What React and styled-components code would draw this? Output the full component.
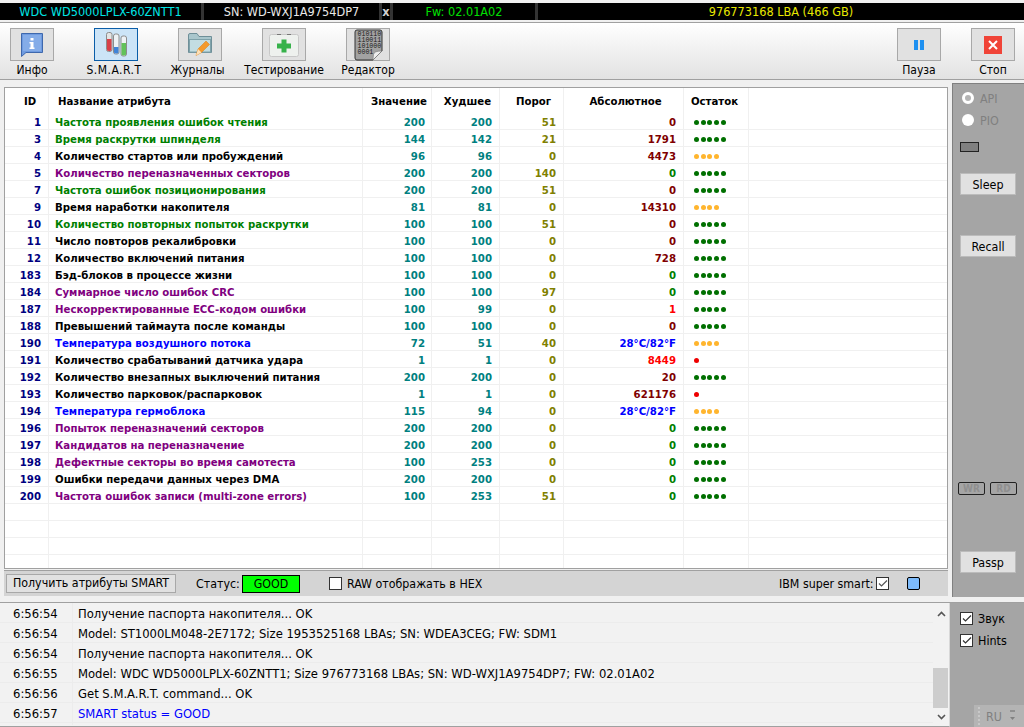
import React from "react";
import styled, { createGlobalStyle } from "styled-components";

const UI_FONT = `"DejaVu Sans Condensed", "DejaVu Sans", "Liberation Sans", sans-serif`;

const GlobalStyle = createGlobalStyle`
  html, body { margin: 0; padding: 0; background: #f0f0f0; }
  body { font-family: ${UI_FONT}; font-size: 12px; color: #000; }
  * { box-sizing: border-box; }
`;

const COLS = "44px 314px 69px 68px 64px 120px 65px 1fr";

const Page = styled.div`
  width: 1024px;
  height: 727px;
  overflow: hidden;
  display: flex;
  flex-direction: column;
  background: #f0f0f0;
`;

const TopBar = styled.div`
  height: 17px;
  margin-top: 3px;
  background: #000;
  display: flex;
  font-size: 12.6px;
  line-height: 17px;
`;

const TopCell = styled.div`
  width: ${(p) => p.$w}px;
  color: ${(p) => p.$color};
  text-align: center;
  border-right: ${(p) => (p.$sep ? "3px solid #333" : "none")};
  white-space: nowrap;
`;

const Toolbar = styled.div`
  height: 58px;
  margin-top: 2px;
  border-top: 1px solid #a0a0a0;
  border-bottom: 1px solid #a0a0a0;
  background: linear-gradient(#ffffff, #e2e2e2);
  display: flex;
  padding: 5px 0 0 10px;
`;

const ToolItem = styled.div`
  width: 44px;
  margin-left: ${(p) => p.$ml || 0}px;
  display: flex;
  flex-direction: column;
  align-items: center;
`;

const ToolIcon = styled.div`
  width: 44px;
  height: 33px;
  flex: none;
  border: 1px solid ${(p) => (p.$active ? "#0a5da8" : "#a8a8a8")};
  background: ${(p) => (p.$active ? "#cce4f7" : "#e1e1e1")};
  display: flex;
  align-items: center;
  justify-content: center;
`;

const ToolLabel = styled.div`
  margin-top: 2px;
  margin-left: ${(p) => p.$shift || 0}px;
  font-size: 12px;
  line-height: 14px;
  white-space: nowrap;
  letter-spacing: ${(p) => (p.$spaced ? "0.5px" : "0")};
`;

const ToolSpacer = styled.div`
  flex: ${(p) => (p.$w ? `0 0 ${p.$w}px` : "1")};
`;

const Main = styled.div`
  height: 522px;
  display: flex;
`;

const LeftPane = styled.div`
  width: 950px;
  padding: 7px 2px 0 4px;
  display: flex;
  flex-direction: column;
`;

const TableBox = styled.div`
  height: 482px;
  border: 1px solid #a0a0a0;
  background: #fff;
  overflow: hidden;
`;

const AttrRow = styled.div`
  display: grid;
  grid-template-columns: ${COLS};
  grid-auto-rows: 16px;
  height: 17px;
  line-height: 20px;
  border-bottom: 1px solid #f0f0f0;
  font-weight: bold;
  font-size: 11.3px;
`;

const HeadRow = styled(AttrRow)`
  grid-auto-rows: 25px;
  height: 25px;
  line-height: 28px;
  border-bottom: 0;
`;

const HeadCell = styled.div`
  text-align: ${(p) => p.$align || "center"};
  padding-left: ${(p) => p.$pad || 0}px;
  padding-right: ${(p) => p.$padr || 0}px;
  border-right: 1px solid #f0f0f0;
  white-space: nowrap;
`;

const Cell = styled.div`
  color: ${(p) => p.$color || "#000"};
  text-align: ${(p) => p.$align || "right"};
  padding-right: ${(p) => p.$padr || 0}px;
  padding-left: ${(p) => p.$pad || 0}px;
  border-right: 1px solid #f0f0f0;
  white-space: nowrap;
`;

const DotsCell = styled.div`
  display: flex;
  align-items: center;
  gap: 1.7px;
  padding: 2px 0 0 10px;
  border-right: 1px solid #f0f0f0;
`;

const Dot = styled.span`
  width: 5px;
  height: 5px;
  border-radius: 50%;
  background: ${(p) => p.$color};
`;

const StatusBar = styled.div`
  height: 26px;
  margin-top: 1px;
  background: #d4d4d4;
  display: flex;
  align-items: center;
  padding: 0 0 0 2px;
  border-top: 1px solid #a0a0a0;
  font-size: 12.3px;
`;

const GetButton = styled.div`
  width: 170px;
  height: 19px;
  line-height: 17px;
  text-align: center;
  border: 1px solid #a8a8a8;
  background: #e1e1e1;
  white-space: nowrap;
`;

const StatusLabel = styled.div`
  width: ${(p) => p.$w}px;
  margin-left: ${(p) => p.$ml || 0}px;
  white-space: nowrap;
`;

const GoodBox = styled.div`
  width: 58px;
  height: 18px;
  line-height: 16px;
  text-align: center;
  background: #00ff00;
  border: 1px solid #000;
`;

const Check = styled.span`
  display: inline-flex;
  width: 13px;
  height: 13px;
  flex: none;
  border: 1px solid #333;
  background: #fff;
  margin-left: ${(p) => p.$ml || 0}px;
`;

const BlueSquare = styled.div`
  width: 13px;
  height: 13px;
  margin-left: 18px;
  background: #7dbbfb;
  border: 1px solid #000;
  border-radius: 2px;
`;

const SidePane = styled.div`
  flex: 1;
  margin: 3px 0 5px 2px;
  background: #a5a5a5;
  border-left: 1px solid #808080;
  border-top: 1px solid #808080;
  padding: 3px 0 0 7px;
  display: flex;
  flex-direction: column;
  font-size: 12.4px;
`;

const RadioRow = styled.div`
  display: flex;
  align-items: center;
  height: 22px;
  color: #808080;
  gap: 6px;
  padding-left: 2px;
`;

const Radio = styled.span`
  width: 12px;
  height: 12px;
  border-radius: 50%;
  background: ${(p) => (p.$on ? "#b4b4b4" : "#fff")};
  border: ${(p) => (p.$on ? "3px solid #fff" : "none")};
`;

const Led = styled.div`
  width: 19px;
  height: 10px;
  margin-top: 11px;
  background: #808080;
  border: 1px solid #222;
`;

const SideButton = styled.div`
  width: 56px;
  height: 22px;
  flex: none;
  line-height: 21px;
  margin-top: ${(p) => p.$mt}px;
  text-align: center;
  background: #e1e1e1;
  border: 1px solid #bcbcbc;
`;

const Mini = styled.div`
  display: flex;
  gap: 5px;
  margin: 225px 0 0 -2px;
`;

const MiniBox = styled.div`
  width: 27px;
  height: 13px;
  line-height: 11px;
  text-align: center;
  font-size: 10px;
  font-weight: bold;
  color: #8f8f8f;
  border: 1px solid #222;
  border-radius: 2px;
`;

const Bottom = styled.div`
  flex: 1;
  display: flex;
  border-top: 1px solid #a0a0a0;
`;

const LogPane = styled.div`
  width: 950px;
  height: 124px;
  background: #f2f2f2;
  display: flex;
  border-bottom: 1px solid #a0a0a0;
  border-right: 1px solid #d8d8d8;
`;

const LogList = styled.div`
  flex: 1;
`;

const LogRow = styled.div`
  display: grid;
  grid-template-columns: 73px 1fr;
  height: 20px;
  line-height: 22px;
  border-bottom: 1px solid #ececec;
  font-size: 12.9px;
  color: ${(p) => p.$color || "#000"};
`;

const LogTime = styled.div`
  padding-left: 13px;
  border-right: 1px solid #ececec;
  color: #000;
`;

const LogMsg = styled.div`
  padding-left: 5px;
  white-space: nowrap;
`;

const ScrollBar = styled.div`
  width: 16px;
  display: flex;
  flex-direction: column;
  align-items: center;
  justify-content: space-between;
  position: relative;
  background: #f2f2f2;
  padding: 8px 0 6px;
`;

const ScrollThumb = styled.div`
  position: absolute;
  left: 0;
  right: 1px;
  bottom: 18px;
  height: 40px;
  background: #cdcdcd;
`;

const BottomSide = styled.div`
  flex: 1;
  background: #a5a5a5;
  padding: 9px 0 0 10px;
  position: relative;
  font-size: 12.4px;
`;

const SideCheck = styled.div`
  display: flex;
  align-items: center;
  gap: 5px;
  height: 13px;
  margin-bottom: 9px;
`;

const LangBar = styled.div`
  position: absolute;
  right: 0;
  bottom: 0;
  width: 50px;
  height: 22px;
  background: #b4b4b4;
  color: #808080;
  display: flex;
  align-items: center;
  padding-left: 4px;
  border-left: 0;
`;

const LangGrip = styled.span`
  width: 0;
  height: 18px;
  border-left: 2px dotted #c8c8c8;
`;

const LangText = styled.span`
  margin-left: 6px;
  width: 23px;
`;

const Tick = ({ color = "#555" }) => (
  <svg width="11" height="11" viewBox="0 0 11 11">
    <path d="M2 5.5 L4.5 8 L10 2.5" fill="none" stroke={color} strokeWidth="1.2" />
  </svg>
);

const InfoIcon = () => (
  <svg width="22" height="24" viewBox="0 0 22 24">
    <path d="M0.5 0.5 H21.5 V19.5 H5 L0.5 23.5 Z" fill="#6f9be0" stroke="#3e68ad" />
    <rect x="2" y="2" width="18" height="16" fill="#84ace8" />
    <rect x="9.5" y="5" width="3" height="2.5" fill="#fff" />
    <path d="M8.5 9 H12.5 V14.5 H13.5 V16 H8.5 V14.5 H9.5 V10.5 H8.5 Z" fill="#fff" />
  </svg>
);

const TubesIcon = () => (
  <svg width="21" height="25" viewBox="0 0 21 25">
    <rect x="0.5" y="0.5" width="5.5" height="19" rx="2" fill="#e4e4e4" stroke="#8c8c8c" />
    <path d="M1 7 H5.5 V18 Q5.5 19 3.2 19 Q1 19 1 18 Z" fill="#d8414a" />
    <rect x="7.5" y="2" width="5.5" height="20" rx="2" fill="#eef2f6" stroke="#8c8c8c" />
    <path d="M8 15 H12.5 V20.5 Q12.5 21.5 10.2 21.5 Q8 21.5 8 20.5 Z" fill="#3f84d8" />
    <rect x="15" y="4" width="5.5" height="20" rx="2" fill="#eef2f6" stroke="#8c8c8c" />
    <path d="M15.5 11 H20 V22.5 Q20 23.5 17.7 23.5 Q15.5 23.5 15.5 22.5 Z" fill="#62c25a" />
  </svg>
);

const FolderIcon = () => (
  <svg width="24" height="23" viewBox="0 0 24 23">
    <path d="M0.5 2 Q0.5 0.5 2 0.5 H9 L11 3.5 H23.5 V19.5 H0.5 Z" fill="#a9c6cc" stroke="#6f8f98" />
    <rect x="1.5" y="6.5" width="21" height="12.5" fill="#c3dde2" stroke="#7fa2aa" />
    <path d="M8 22.5 L10 16 L18 8 L21.5 11.5 L13.5 19.5 Z" fill="#f39a2d" stroke="#d87c12" strokeWidth="0.5" />
    <path d="M8 22.5 L10 16 L13.5 19.5 Z" fill="#fde0b8" />
  </svg>
);

const KitIcon = () => (
  <svg width="30" height="24" viewBox="0 0 30 24">
    <path d="M0.5 3.5 Q0.5 1.5 2.5 1.5 H27.5 Q29.5 1.5 29.5 3.5 V21.5 Q29.5 23.5 27.5 23.5 H2.5 Q0.5 23.5 0.5 21.5 Z" fill="#eef1ee" stroke="#c8c8c8" />
    <path d="M8 1.5 H12 M18 1.5 H22" stroke="#777" strokeWidth="1" />
    <path d="M12.5 6.5 H17.5 V10.5 H22 V15.5 H17.5 V19.5 H12.5 V15.5 H8 V10.5 H12.5 Z" fill="#36b24a" />
  </svg>
);

const BinaryText = styled.text`
  font-family: "Liberation Mono", monospace;
  font-size: 6.6px;
  fill: #1a1a1a;
`;

const DocIcon = () => (
  <svg width="29" height="32" viewBox="0 0 29 32">
    <path d="M1 3 Q1 1 3 1 H26 Q28 1 28 3 V22 L19 31 H3 Q1 31 1 29 Z" fill="#a2a2a2" stroke="#333" />
    <path d="M19 31 Q19 24 21 23 Q24 22 28 22 Z" fill="#eee" stroke="#777" strokeWidth="0.6" />
    <BinaryText x="3.5" y="7">010110</BinaryText>
    <BinaryText x="3.5" y="13">110011</BinaryText>
    <BinaryText x="3.5" y="19">101000</BinaryText>
    <BinaryText x="3.5" y="25">0001</BinaryText>
  </svg>
);

const PauseIcon = () => (
  <svg width="10" height="10" viewBox="0 0 10 10">
    <rect x="0" y="0" width="4" height="10" fill="#1e90f0" />
    <rect x="6" y="0" width="4" height="10" fill="#1e90f0" />
  </svg>
);

const StopIcon = () => (
  <svg width="18" height="18" viewBox="0 0 18 18">
    <rect width="18" height="18" fill="#f04438" />
    <path d="M5 5 L13 13 M13 5 L5 13" stroke="#fff" strokeWidth="2" />
  </svg>
);

const ChevUp = () => (
  <svg width="9" height="6" viewBox="0 0 9 6">
    <path d="M1 5 L4.5 1.5 L8 5" fill="none" stroke="#555" strokeWidth="1.6" />
  </svg>
);

const ChevDown = () => (
  <svg width="9" height="6" viewBox="0 0 9 6">
    <path d="M1 1 L4.5 4.5 L8 1" fill="none" stroke="#555" strokeWidth="1.6" />
  </svg>
);

const LangArrow = () => (
  <svg width="7" height="12" viewBox="0 0 7 12">
    <path d="M1 1 H6" stroke="#808080" strokeWidth="1.4" />
    <path d="M1 7 H6 L3.5 10 Z" fill="#808080" />
  </svg>
);

const GREEN = "#008000";
const PURPLE = "#800080";
const BLUE = "#0000ff";
const BLACK = "#000";
const DARKRED = "#800000";
const RED = "#ff0000";

const attrs = [
  [1, "Частота проявления ошибок чтения", GREEN, 200, 200, 51, "0", DARKRED, 5],
  [3, "Время раскрутки шпинделя", GREEN, 144, 142, 21, "1791", DARKRED, 5],
  [4, "Количество стартов или пробуждений", BLACK, 96, 96, 0, "4473", DARKRED, 4],
  [5, "Количество переназначенных секторов", PURPLE, 200, 200, 140, "0", GREEN, 5],
  [7, "Частота ошибок позиционирования", GREEN, 200, 200, 51, "0", DARKRED, 5],
  [9, "Время наработки накопителя", BLACK, 81, 81, 0, "14310", DARKRED, 4],
  [10, "Количество повторных попыток раскрутки", GREEN, 100, 100, 51, "0", DARKRED, 5],
  [11, "Число повторов рекалибровки", BLACK, 100, 100, 0, "0", DARKRED, 5],
  [12, "Количество включений питания", BLACK, 100, 100, 0, "728", DARKRED, 5],
  [183, "Бэд-блоков в процессе жизни", BLACK, 100, 100, 0, "0", GREEN, 5],
  [184, "Суммарное число ошибок CRC", PURPLE, 100, 100, 97, "0", GREEN, 5],
  [187, "Нескорректированные ECC-кодом ошибки", PURPLE, 100, 99, 0, "1", RED, 5],
  [188, "Превышений таймаута после команды", BLACK, 100, 100, 0, "0", DARKRED, 5],
  [190, "Температура воздушного потока", BLUE, 72, 51, 40, "28°C/82°F", BLUE, 4],
  [191, "Количество срабатываний датчика удара", BLACK, 1, 1, 0, "8449", RED, 1],
  [192, "Количество внезапных выключений питания", BLACK, 200, 200, 0, "20", DARKRED, 5],
  [193, "Количество парковок/распарковок", BLACK, 1, 1, 0, "621176", DARKRED, 1],
  [194, "Температура гермоблока", BLUE, 115, 94, 0, "28°C/82°F", BLUE, 4],
  [196, "Попыток переназначений секторов", PURPLE, 200, 200, 0, "0", GREEN, 5],
  [197, "Кандидатов на переназначение", PURPLE, 200, 200, 0, "0", GREEN, 5],
  [198, "Дефектные секторы во время самотеста", PURPLE, 100, 253, 0, "0", GREEN, 5],
  [199, "Ошибки передачи данных через DMA", BLACK, 200, 200, 0, "0", GREEN, 5],
  [200, "Частота ошибок записи (multi-zone errors)", PURPLE, 100, 253, 51, "0", GREEN, 5],
];

const dotColor = { 5: "#007000", 4: "#ffb52e", 1: "#ee0000" };

const logs = [
  ["6:56:54", "Получение паспорта накопителя... OK"],
  ["6:56:54", "Model: ST1000LM048-2E7172; Size 1953525168 LBAs; SN: WDEA3CEG; FW: SDM1"],
  ["6:56:54", "Получение паспорта накопителя... OK"],
  ["6:56:55", "Model: WDC WD5000LPLX-60ZNTT1; Size 976773168 LBAs; SN: WD-WXJ1A9754DP7; FW: 02.01A02"],
  ["6:56:56", "Get S.M.A.R.T. command... OK"],
  ["6:56:57", "SMART status = GOOD", "#0000ff"],
];

const tools = [
  { label: "Инфо", icon: <InfoIcon /> },
  { label: "S.M.A.R.T", ml: 40, shift: -4, icon: <TubesIcon />, active: true, spaced: true },
  { label: "Журналы", ml: 40, shift: -5, icon: <FolderIcon /> },
  { label: "Тестирование", ml: 40, icon: <KitIcon /> },
  { label: "Редактор", ml: 40, icon: <DocIcon /> },
];

const Row = ({ a }) => {
  const [id, name, color, val, worst, thr, raw, rawColor, dots] = a;
  return (
    <AttrRow>
      <Cell $color="#000080" $padr={7}>{id}</Cell>
      <Cell $color={color} $align="left" $pad={6}>{name}</Cell>
      <Cell $color="#008080" $padr={6}>{val}</Cell>
      <Cell $color="#008080" $padr={7}>{worst}</Cell>
      <Cell $color="#808000" $padr={7}>{thr}</Cell>
      <Cell $color={rawColor} $padr={7}>{raw}</Cell>
      <DotsCell>
        {Array.from({ length: dots }).map((_, i) => (
          <Dot key={i} $color={dotColor[dots]} />
        ))}
      </DotsCell>
      <div />
    </AttrRow>
  );
};

const EmptyRow = () => (
  <AttrRow>
    {[0, 1, 2, 3, 4, 5, 6].map((i) => (
      <Cell key={i} />
    ))}
    <div />
  </AttrRow>
);

export default function App() {
  return (
    <Page>
      <GlobalStyle />
      <TopBar>
        <TopCell $w={204} $color="#00e5e5" $sep>WDC WD5000LPLX-60ZNTT1</TopCell>
        <TopCell $w={178} $color="#e8e8e8" $sep>SN: WD-WXJ1A9754DP7</TopCell>
        <TopCell $w={11} $color="#d0d0d0" $sep><b>x</b></TopCell>
        <TopCell $w={145} $color="#00e000" $sep>Fw: 02.01A02</TopCell>
        <TopCell $w={486} $color="#e8e800">976773168 LBA (466 GB)</TopCell>
      </TopBar>
      <Toolbar>
        {tools.map((t) => (
          <ToolItem key={t.label} $ml={t.ml}>
            <ToolIcon $active={t.active}>{t.icon}</ToolIcon>
            <ToolLabel $spaced={t.spaced} $shift={t.shift}>{t.label}</ToolLabel>
          </ToolItem>
        ))}
        <ToolSpacer />
        <ToolItem>
          <ToolIcon><PauseIcon /></ToolIcon>
          <ToolLabel>Пауза</ToolLabel>
        </ToolItem>
        <ToolItem $ml={30}>
          <ToolIcon><StopIcon /></ToolIcon>
          <ToolLabel>Стоп</ToolLabel>
        </ToolItem>
        <ToolSpacer $w={9} />
      </Toolbar>
      <Main>
        <LeftPane>
          <TableBox>
            <HeadRow>
              <HeadCell $pad={7}>ID</HeadCell>
              <HeadCell $align="left" $pad={9}>Название атрибута</HeadCell>
              <HeadCell $pad={4}>Значение</HeadCell>
              <HeadCell $pad={4}>Худшее</HeadCell>
              <HeadCell $pad={4}>Порог</HeadCell>
              <HeadCell $pad={4}>Абсолютное</HeadCell>
              <HeadCell $padr={3}>Остаток</HeadCell>
              <div />
            </HeadRow>
            {attrs.map((a) => (
              <Row key={a[0]} a={a} />
            ))}
            <EmptyRow />
            <EmptyRow />
            <EmptyRow />
            <EmptyRow />
          </TableBox>
          <StatusBar>
            <GetButton>Получить атрибуты SMART</GetButton>
            <StatusLabel $ml={20} $w={46}>Статус:</StatusLabel>
            <GoodBox>GOOD</GoodBox>
            <Check $ml={29} />
            <StatusLabel $ml={5} $w={432}>RAW отображать в HEX</StatusLabel>
            <StatusLabel $w={97}>IBM super smart:</StatusLabel>
            <Check><Tick /></Check>
            <BlueSquare />
          </StatusBar>
        </LeftPane>
        <SidePane>
          <RadioRow><Radio $on />API</RadioRow>
          <RadioRow><Radio />PIO</RadioRow>
          <Led />
          <SideButton $mt={21}>Sleep</SideButton>
          <SideButton $mt={40}>Recall</SideButton>
          <Mini>
            <MiniBox>WR</MiniBox>
            <MiniBox>RD</MiniBox>
          </Mini>
          <SideButton $mt={56}>Passp</SideButton>
        </SidePane>
      </Main>
      <Bottom>
        <LogPane>
          <LogList>
            {logs.map(([time, msg, color], i) => (
              <LogRow key={i} $color={color}>
                <LogTime>{time}</LogTime>
                <LogMsg>{msg}</LogMsg>
              </LogRow>
            ))}
          </LogList>
          <ScrollBar>
            <ChevUp />
            <ScrollThumb />
            <ChevDown />
          </ScrollBar>
        </LogPane>
        <BottomSide>
          <SideCheck><Check><Tick color="#333" /></Check>Звук</SideCheck>
          <SideCheck><Check><Tick color="#333" /></Check>Hints</SideCheck>
          <LangBar>
            <LangGrip />
            <LangText>RU</LangText>
            <LangArrow />
          </LangBar>
        </BottomSide>
      </Bottom>
    </Page>
  );
}
